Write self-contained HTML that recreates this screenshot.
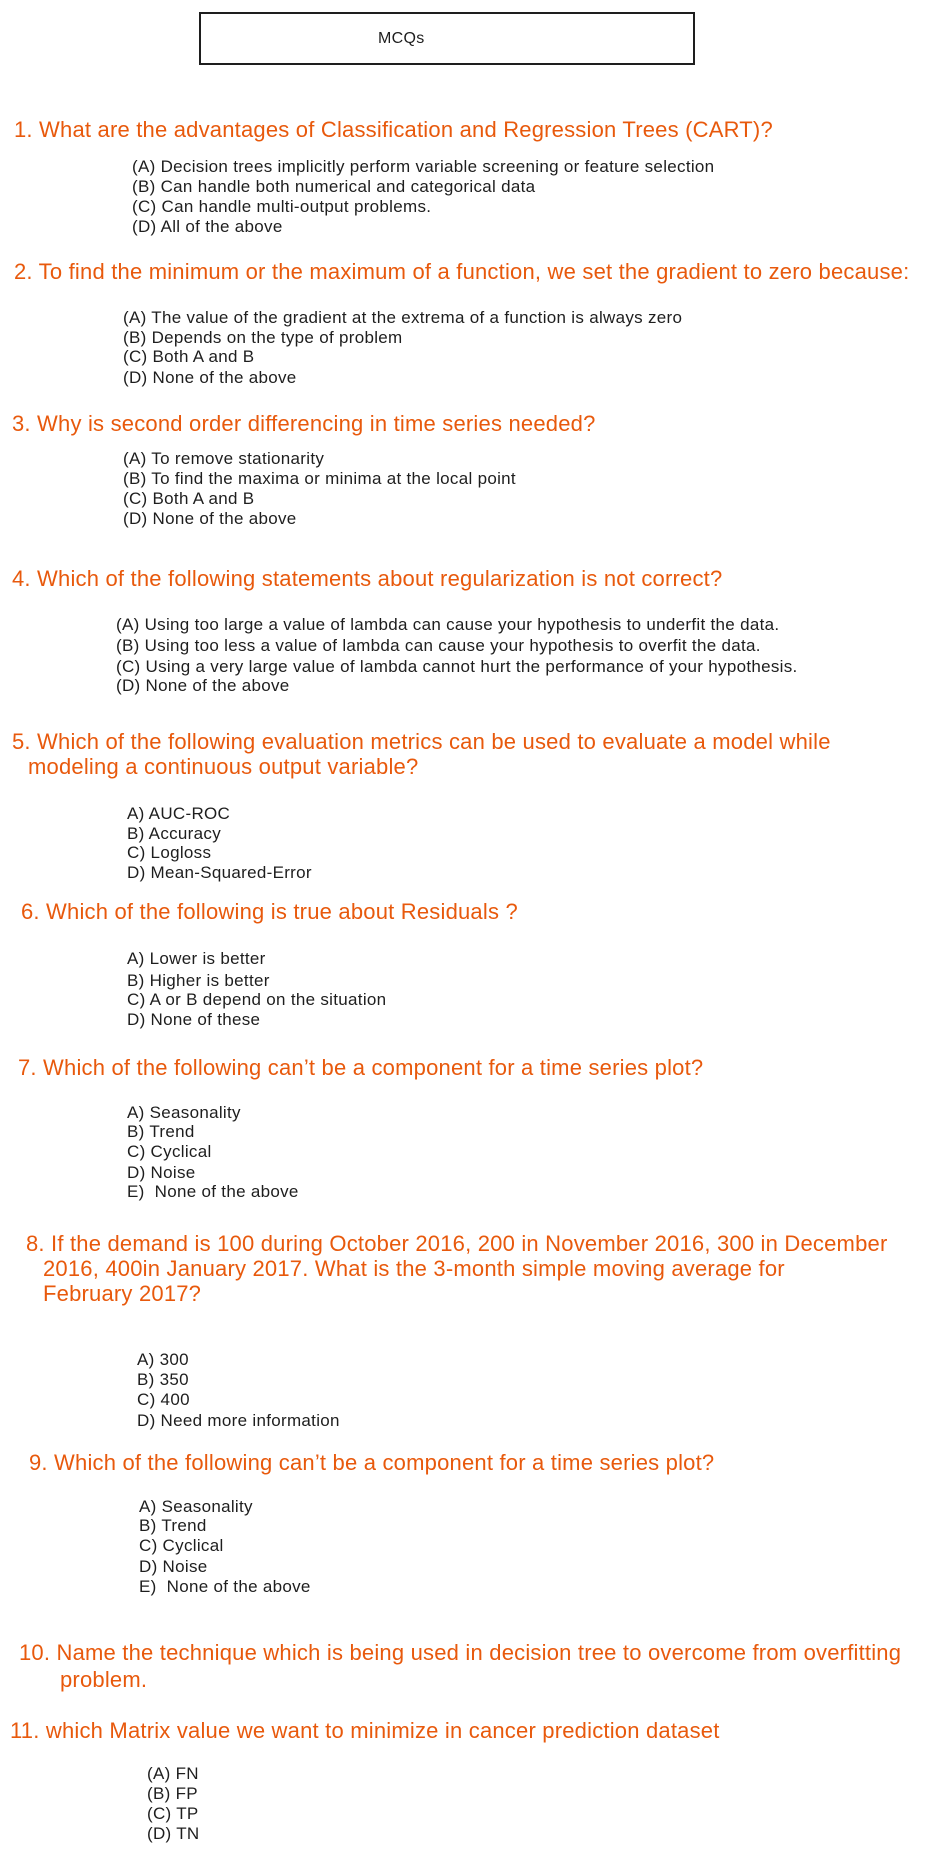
<!DOCTYPE html>
<html><head><meta charset="utf-8">
<style>
html,body{margin:0;padding:0;background:#fff;}
body{width:934px;height:1857px;position:relative;overflow:hidden;font-family:"Liberation Sans",sans-serif;}
.q{position:absolute;color:#e8590c;font-size:22px;line-height:22px;white-space:nowrap;letter-spacing:0.2px;}
.o{position:absolute;color:#1e1e1e;font-size:17px;line-height:17px;white-space:nowrap;letter-spacing:0.3px;}
.box{position:absolute;left:199px;top:12px;width:492px;height:49px;border:2px solid #1e1e1e;}
</style></head><body>
<div class="box"></div>
<div class="o" style="left:378px;top:30px;font-size:16px;">MCQs</div>

<div class="q" style="left:14px;top:119px;">1. What are the advantages of Classification and Regression Trees (CART)?</div>
<div class="o" style="left:132px;top:158px;">(A) Decision trees implicitly perform variable screening or feature selection</div>
<div class="o" style="left:132px;top:178px;">(B) Can handle both numerical and categorical data</div>
<div class="o" style="left:132px;top:198px;">(C) Can handle multi-output problems.</div>
<div class="o" style="left:132px;top:218px;">(D) All of the above</div>

<div class="q" style="left:14px;top:261px;">2. To find the minimum or the maximum of a function, we set the gradient to zero because:</div>
<div class="o" style="left:123px;top:309px;">(A) The value of the gradient at the extrema of a function is always zero</div>
<div class="o" style="left:123px;top:329px;">(B) Depends on the type of problem</div>
<div class="o" style="left:123px;top:348px;">(C) Both A and B</div>
<div class="o" style="left:123px;top:369px;">(D) None of the above</div>

<div class="q" style="left:12px;top:413px;">3. Why is second order differencing in time series needed?</div>
<div class="o" style="left:123px;top:450px;">(A) To remove stationarity</div>
<div class="o" style="left:123px;top:470px;">(B) To find the maxima or minima at the local point</div>
<div class="o" style="left:123px;top:490px;">(C) Both A and B</div>
<div class="o" style="left:123px;top:510px;">(D) None of the above</div>

<div class="q" style="left:12px;top:568px;">4. Which of the following statements about regularization is not correct?</div>
<div class="o" style="left:116px;top:616px;">(A) Using too large a value of lambda can cause your hypothesis to underfit the data.</div>
<div class="o" style="left:116px;top:637px;">(B) Using too less a value of lambda can cause your hypothesis to overfit the data.</div>
<div class="o" style="left:116px;top:658px;">(C) Using a very large value of lambda cannot hurt the performance of your hypothesis.</div>
<div class="o" style="left:116px;top:677px;">(D) None of the above</div>

<div class="q" style="left:12px;top:731px;">5. Which of the following evaluation metrics can be used to evaluate a model while</div>
<div class="q" style="left:28px;top:756px;">modeling a continuous output variable?</div>
<div class="o" style="left:127px;top:805px;">A) AUC-ROC</div>
<div class="o" style="left:127px;top:825px;">B) Accuracy</div>
<div class="o" style="left:127px;top:844px;">C) Logloss</div>
<div class="o" style="left:127px;top:864px;">D) Mean-Squared-Error</div>

<div class="q" style="left:21px;top:901px;">6. Which of the following is true about Residuals ?</div>
<div class="o" style="left:127px;top:950px;">A) Lower is better</div>
<div class="o" style="left:127px;top:972px;">B) Higher is better</div>
<div class="o" style="left:127px;top:991px;">C) A or B depend on the situation</div>
<div class="o" style="left:127px;top:1011px;">D) None of these</div>

<div class="q" style="left:18px;top:1057px;">7. Which of the following can’t be a component for a time series plot?</div>
<div class="o" style="left:127px;top:1104px;">A) Seasonality</div>
<div class="o" style="left:127px;top:1123px;">B) Trend</div>
<div class="o" style="left:127px;top:1143px;">C) Cyclical</div>
<div class="o" style="left:127px;top:1164px;">D) Noise</div>
<div class="o" style="left:127px;top:1183px;">E)&nbsp; None of the above</div>

<div class="q" style="left:26px;top:1233px;">8. If the demand is 100 during October 2016, 200 in November 2016, 300 in December</div>
<div class="q" style="left:43px;top:1258px;">2016, 400in January 2017. What is the 3-month simple moving average for</div>
<div class="q" style="left:43px;top:1283px;">February 2017?</div>
<div class="o" style="left:137px;top:1351px;">A) 300</div>
<div class="o" style="left:137px;top:1371px;">B) 350</div>
<div class="o" style="left:137px;top:1391px;">C) 400</div>
<div class="o" style="left:137px;top:1412px;">D) Need more information</div>

<div class="q" style="left:29px;top:1452px;">9. Which of the following can’t be a component for a time series plot?</div>
<div class="o" style="left:139px;top:1498px;">A) Seasonality</div>
<div class="o" style="left:139px;top:1517px;">B) Trend</div>
<div class="o" style="left:139px;top:1537px;">C) Cyclical</div>
<div class="o" style="left:139px;top:1558px;">D) Noise</div>
<div class="o" style="left:139px;top:1578px;">E)&nbsp; None of the above</div>

<div class="q" style="left:19px;top:1642px;">10. Name the technique which is being used in decision tree to overcome from overfitting</div>
<div class="q" style="left:60px;top:1669px;">problem.</div>

<div class="q" style="left:10px;top:1720px;">11. which Matrix value we want to minimize in cancer prediction dataset</div>
<div class="o" style="left:147px;top:1765px;">(A) FN</div>
<div class="o" style="left:147px;top:1785px;">(B) FP</div>
<div class="o" style="left:147px;top:1805px;">(C) TP</div>
<div class="o" style="left:147px;top:1825px;">(D) TN</div>
</body></html>
